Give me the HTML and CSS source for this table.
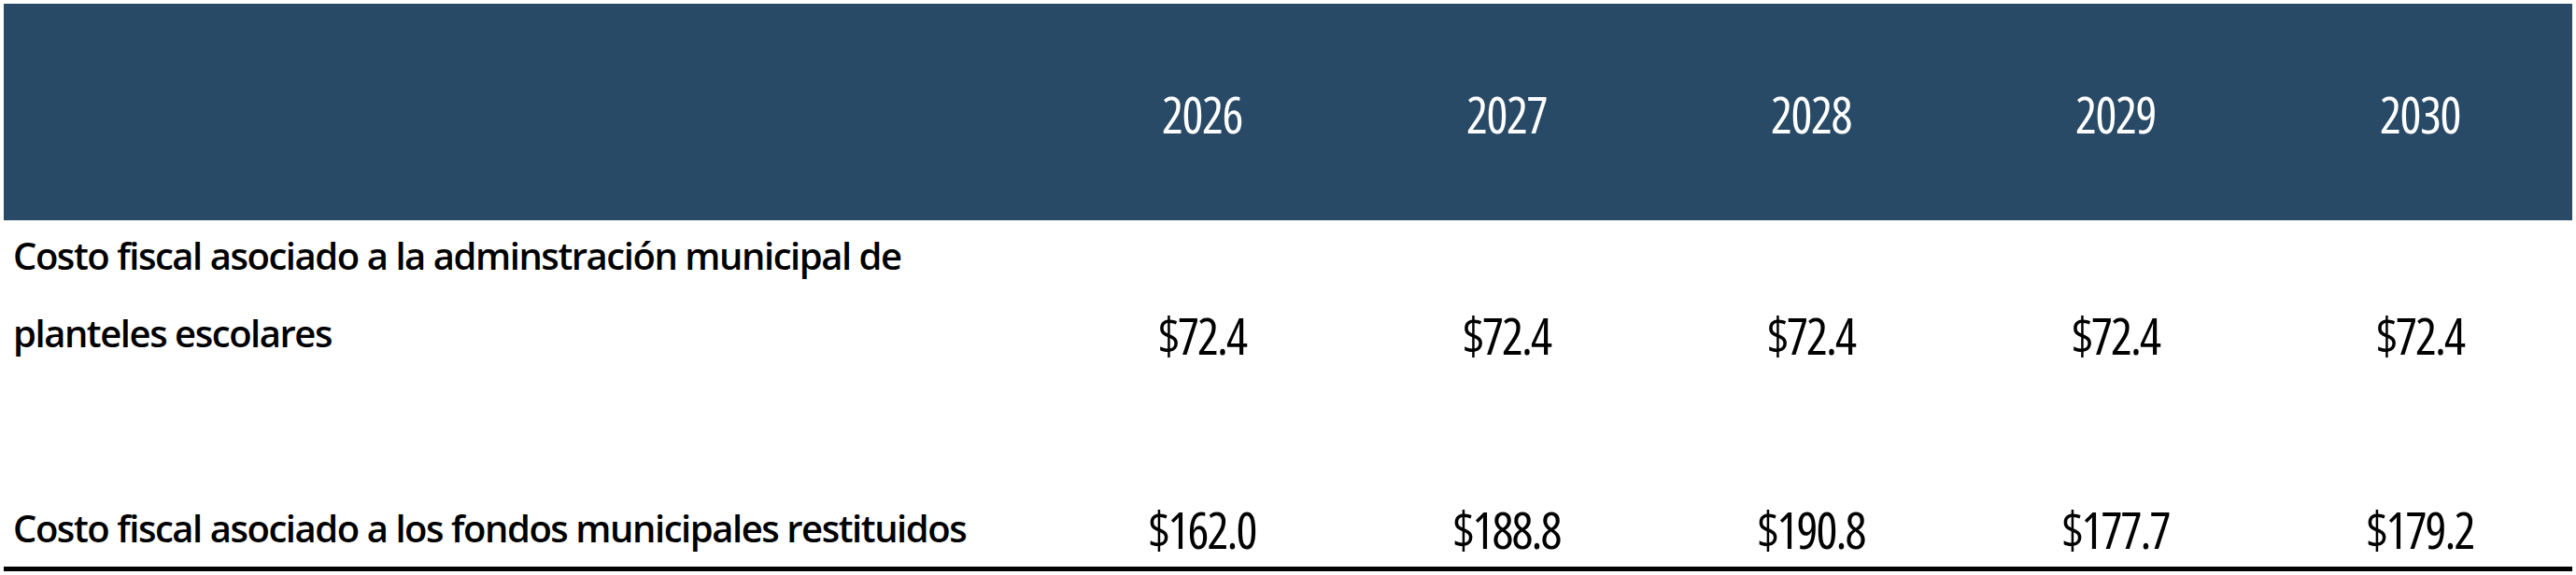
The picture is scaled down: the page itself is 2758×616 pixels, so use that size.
FILE: index.html
```html
<!DOCTYPE html>
<html>
<head>
  <meta charset='utf-8'>
  <title>Costo fiscal</title>
  <meta name='viewport' content='width=device-width, initial-scale=1'>
  <link rel="stylesheet" href="styles.css">
</head>
<body>
  <div class="costs">
    <div class="head">
      <div class="cell label"></div>
      <div class="cell year">2026</div>
      <div class="cell year">2027</div>
      <div class="cell year">2028</div>
      <div class="cell year">2029</div>
      <div class="cell year">2030</div>
    </div>

    <div class="row first">
      <div class="cell label">Costo fiscal asociado a la adminstración municipal de<br>planteles escolares</div>
      <div class="cell value">$72.4</div>
      <div class="cell value">$72.4</div>
      <div class="cell value">$72.4</div>
      <div class="cell value">$72.4</div>
      <div class="cell value">$72.4</div>
    </div>

    <div class="row last">
      <div class="cell label">Costo fiscal asociado a los fondos municipales restituidos</div>
      <div class="cell value">$162.0</div>
      <div class="cell value">$188.8</div>
      <div class="cell value">$190.8</div>
      <div class="cell value">$177.7</div>
      <div class="cell value">$179.2</div>
    </div>
  </div>
</body>
</html>
```

FILE: styles.css
```css
html, body {
  margin: 0;
  background: #fff;
}

body {
  padding: 4px;
  font-family: "Open Sans", "Liberation Sans", sans-serif;
  color: #000;
}

.costs {
  width: 2750px;
}

.head, .row {
  display: grid;
  grid-template-columns: 1120px repeat(5, 326px);
}

.head {
  height: 232px;
  align-items: center;
  background-color: #294a66;
  color: #fff;
}

.year {
  text-align: center;
  font-size: 54px;
  font-stretch: 75%;
  letter-spacing: -1.5px;
  padding-top: 4px;
}

.label {
  padding: 0 10px;
  font-size: 40px;
  font-weight: 600;
  letter-spacing: -1.45px;
  line-height: 83px;
}

.value {
  text-align: center;
  font-size: 54px;
  font-weight: 500;
  font-stretch: 75%;
  letter-spacing: -2px;
  line-height: 70px;
}

.first {
  height: 236px;
}

.first .label {
  margin-top: -4px;
}

.first .value {
  padding-top: 88px;
}

.last {
  height: 135px;
  border-bottom: 5px solid #000;
}

.last .label {
  padding-top: 52px;
}

.last .value {
  padding-top: 60px;
}
```
